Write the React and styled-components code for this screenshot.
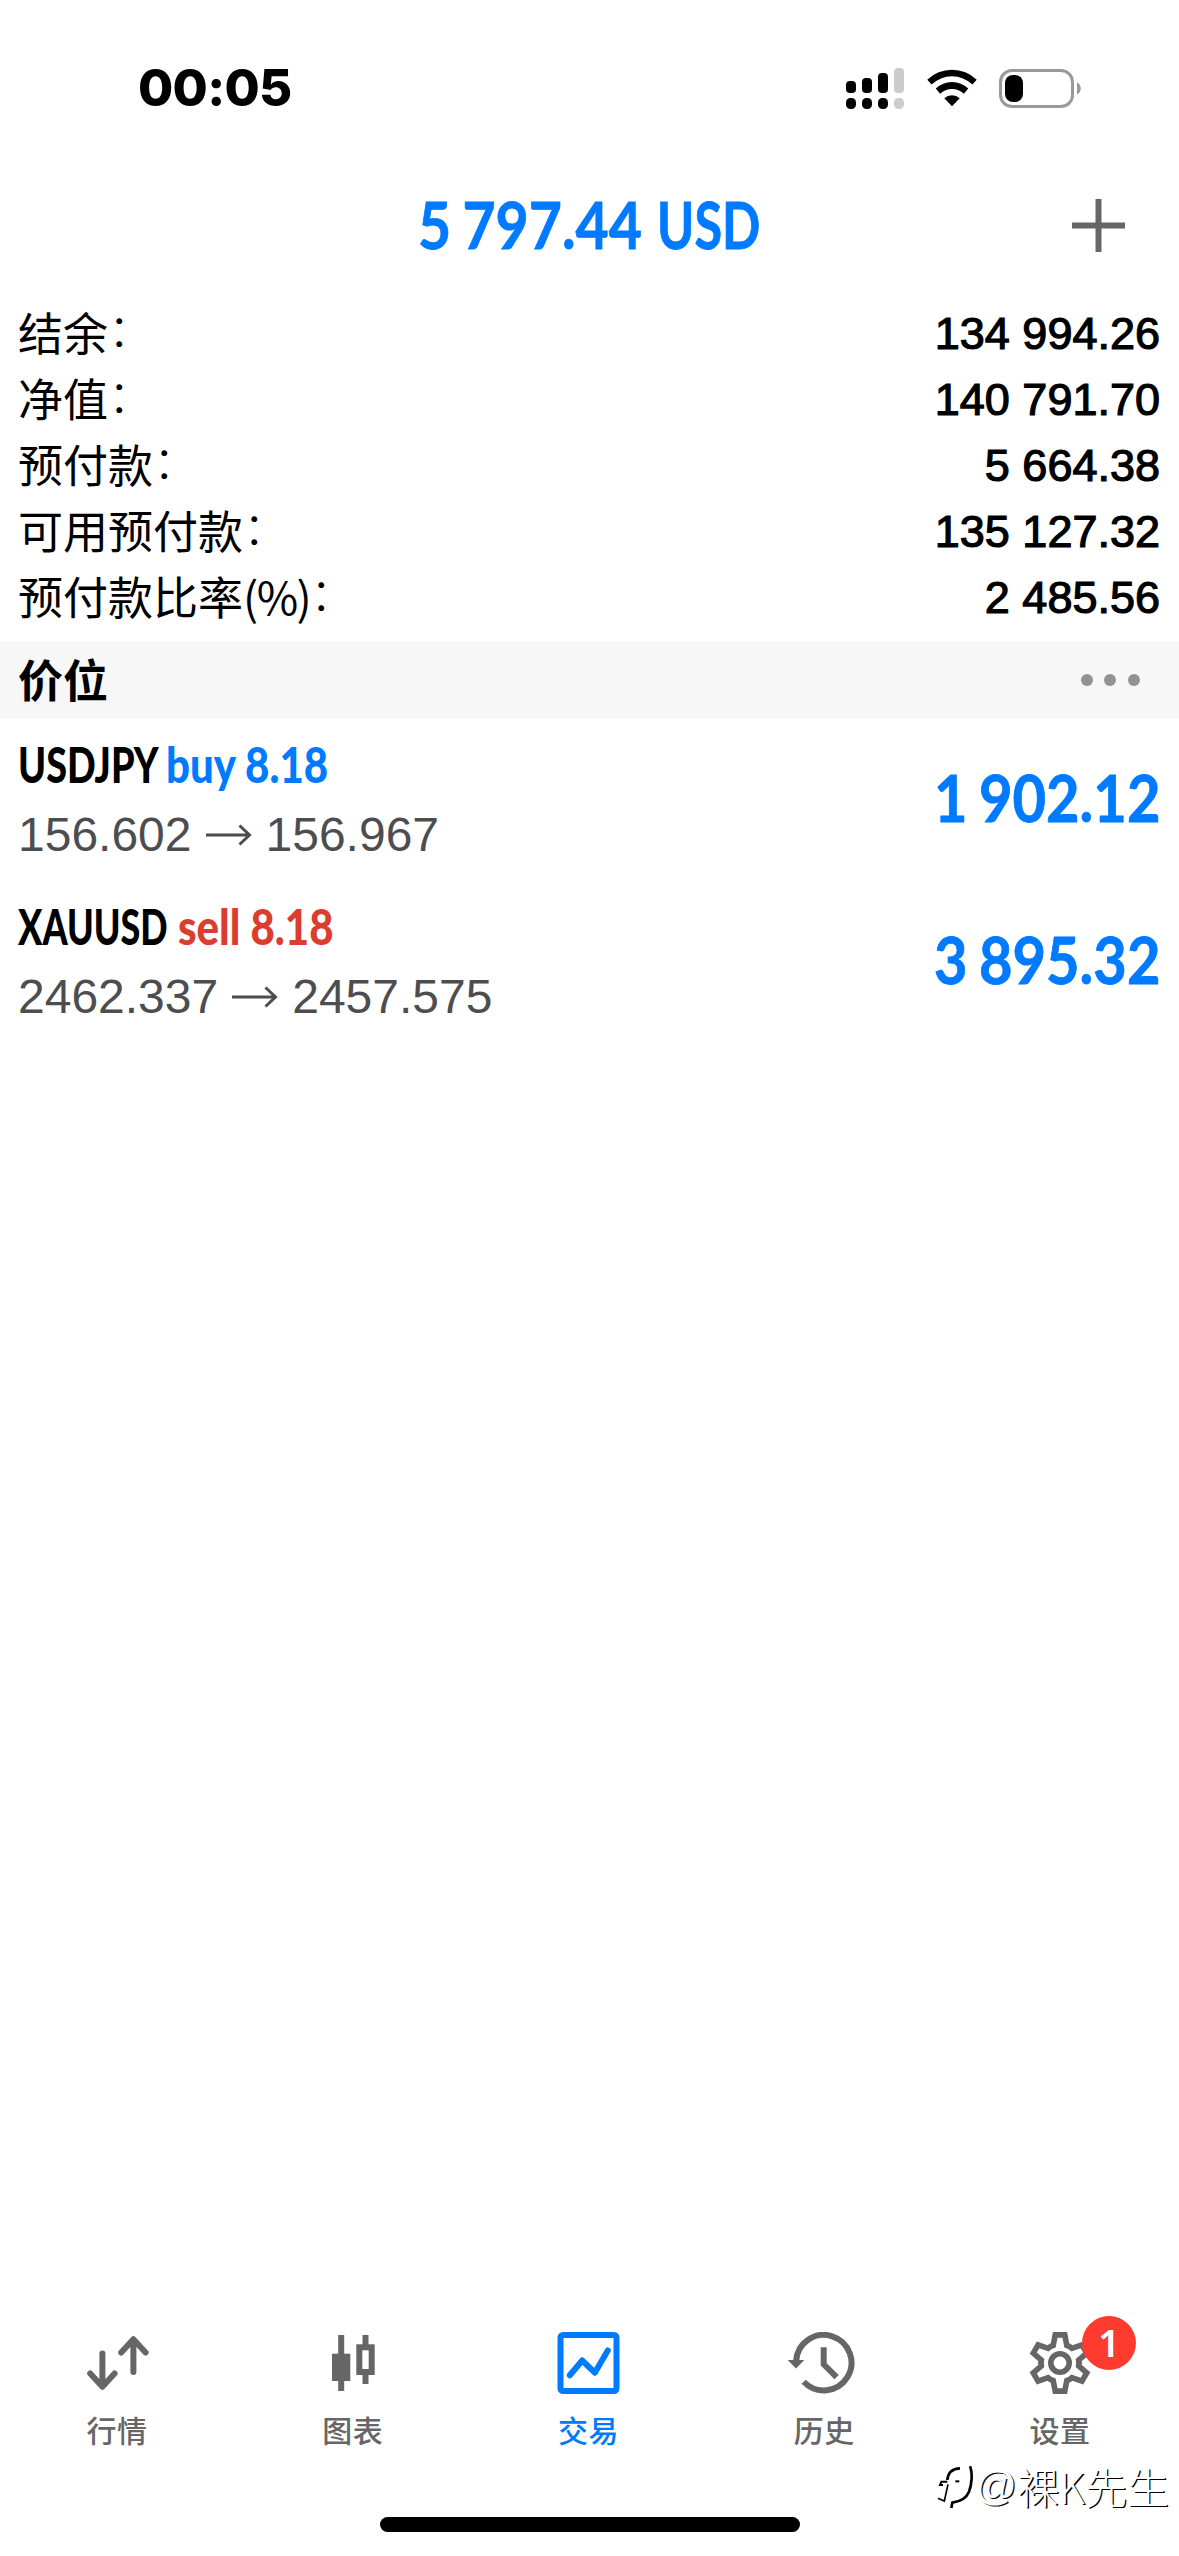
import React from 'react'
import styled, { createGlobalStyle } from 'styled-components'

const BLUE = '#007aff'
const RED = '#db3d2f'
const GRAY = '#666666'

const account = [
  { label: '结余', value: '134 994.26' },
  { label: '净值', value: '140 791.70' },
  { label: '预付款', value: '5 664.38' },
  { label: '可用预付款', value: '135 127.32' },
  { label: '预付款比率', unit: '(%)', value: '2 485.56' },
]

const positions = [
  { symbol: 'USDJPY', width: 148, stretch: 0.755, side: 'buy', lots: '8.18', open: '156.602', price: '156.967', profit: '1 902.12' },
  { symbol: 'XAUUSD', width: 160, stretch: 0.718, side: 'sell', lots: '8.18', open: '2462.337', price: '2457.575', profit: '3 895.32' },
]

const SignalIcon = () => (
  <svg width="58" height="41" viewBox="0 0 58 41">
    <rect x="0" y="13" width="10" height="12" rx="4" />
    <rect x="16" y="10" width="10" height="15" rx="4" />
    <rect x="32" y="5" width="10" height="20" rx="4" />
    <rect x="48" y="0" width="10" height="25" rx="4" fill="#cccccc" />
    <rect x="0" y="30" width="10" height="11" rx="4.5" />
    <rect x="16" y="30" width="10" height="11" rx="4.5" />
    <rect x="32" y="30" width="10" height="11" rx="4.5" />
    <rect x="48" y="30" width="10" height="11" rx="4.5" fill="#cccccc" />
  </svg>
)

const WifiIcon = () => (
  <svg width="50" height="38" viewBox="0 0 50 38">
    <path d="M0.3 10.7A35.6 35.6 0 0 1 49.7 10.7L45.4 15.6A29.3 29.3 0 0 0 4.6 15.6Z" />
    <path d="M8.7 19.6A23.5 23.5 0 0 1 41.3 19.6L36.9 24.8A17.2 17.2 0 0 0 13.1 24.8Z" />
    <path d="M17.3 29.2A11.5 11.5 0 0 1 32.7 29.2L25 37.2Z" />
  </svg>
)

const BatteryIcon = () => (
  <svg width="82" height="39" viewBox="0 0 82 39">
    <rect x="1.5" y="1.5" width="72" height="36" rx="11.5" fill="none" stroke="#999999" strokeWidth="3" />
    <rect x="6" y="6" width="18" height="27" rx="8" />
    <path d="M78 13.5C83 15.6 83 23.4 78 25.5Z" fill="#999999" />
  </svg>
)

const QuotesIcon = () => (
  <TabSvg viewBox="0 0 80 62" strokeWidth="6" strokeLinecap="round" strokeLinejoin="round">
    <path d="M24.4 21.5V54.5M12.2 41.5L24.4 54.7L36.6 41.5" />
    <path d="M55.4 40V7.5M43.2 20.5L55.4 7.3L67.6 20.5" />
  </TabSvg>
)

const ChartsIcon = () => (
  <TabSvg viewBox="0 0 80 62" strokeWidth="6">
    <path d="M27.2 3V59M51.5 3V15M51.5 40V52" />
    <rect x="21" y="24.7" width="12.3" height="21.3" fill="currentColor" />
    <rect x="45.3" y="15.3" width="12.4" height="24.7" />
  </TabSvg>
)

const TradeIcon = () => (
  <TabSvg viewBox="0 0 80 62" strokeWidth="6" strokeLinecap="round" strokeLinejoin="round">
    <rect x="11.5" y="3" width="56" height="56" rx="2.5" />
    <path d="M20.8 43.3L33.2 28.5L45.8 40.7L58.8 18.5" />
  </TabSvg>
)

const HistoryIcon = () => (
  <TabSvg viewBox="0 0 80 62" strokeWidth="6">
    <path d="M11.1 29A27.7 27.7 0 1 1 18.7 49.8" />
    <path d="M2.7 28H19.4L11 36.5Z" fill="currentColor" stroke="none" />
    <path d="M38.7 15.3V32.3L51.6 45.2" />
  </TabSvg>
)

const SettingsIcon = () => (
  <TabSvg viewBox="0 0 80 62" strokeWidth="5.6">
    {[0, 60, 120, 180, 240, 300].map((deg) => (
      <path key={deg} d="M29 14.6L32.2 13.4L34.2 2.9H43.8L45.8 13.4L49 14.6" transform={`rotate(${deg} 39 31)`} />
    ))}
    <circle cx="39" cy="31" r="9.2" />
  </TabSvg>
)

const tabs = [
  { label: '行情', Icon: QuotesIcon },
  { label: '图表', Icon: ChartsIcon },
  { label: '交易', Icon: TradeIcon, active: true },
  { label: '历史', Icon: HistoryIcon },
  { label: '设置', Icon: SettingsIcon, badge: 1 },
]

const App = () => {
  return (
    <>
      <GlobalStyle />
      <Screen>
        <StatusBar>
          <Time>00:05</Time>
          <StatusIcons>
            <SignalIcon />
            <WifiIcon />
            <BatteryIcon />
          </StatusIcons>
        </StatusBar>

        <Header>
          <Total>
            <Amount>5 797.44</Amount>
            <Currency>USD</Currency>
          </Total>
          <AddButton aria-label="add">
            <svg width="53" height="53" viewBox="0 0 53 53" stroke={GRAY} strokeWidth="6">
              <path d="M26.5 0V53M0 26.5H53" />
            </svg>
          </AddButton>
        </Header>

        <Account>
          {account.map((row) => (
            <AccountRow key={row.label}>
              <Label>
                {row.label}
                {row.unit && <Unit>{row.unit}</Unit>}
                <Colon>：</Colon>
              </Label>
              <Value>{row.value}</Value>
            </AccountRow>
          ))}
        </Account>

        <SectionBar>
          <SectionTitle>价位</SectionTitle>
          <More>
            <Dot />
            <Dot />
            <Dot />
          </More>
        </SectionBar>

        <Positions>
          {positions.map((p) => (
            <Position key={p.symbol}>
              <div>
                <Deal>
                  <Symbol $width={p.width} $stretch={p.stretch}>{p.symbol}</Symbol>
                  <Side $side={p.side}>{p.side} {p.lots}</Side>
                </Deal>
                <Prices>
                  {p.open}
                  <svg width="46" height="22" viewBox="0 0 46 22" fill="none" stroke="currentColor" strokeWidth="3">
                    <path d="M0 11H44M33.5 1.5L43.5 11L33.5 20.5" />
                  </svg>
                  {p.price}
                </Prices>
              </div>
              <Profit>{p.profit}</Profit>
            </Position>
          ))}
        </Positions>

        <TabBar>
          {tabs.map(({ label, Icon, active, badge }) => (
            <Tab key={label} $active={active}>
              <Icon />
              <TabLabel>{label}</TabLabel>
              {badge && <Badge>{badge}</Badge>}
            </Tab>
          ))}
        </TabBar>

        <HomeIndicator />

        <Watermark>
          <svg width="40" height="46" viewBox="108 546 120 138" fill="none" stroke="#000" strokeWidth="8">
            <path d="M183 562C160 563 147 573 145 597" />
            <path d="M145 602H127L123 612H132" strokeWidth="6" />
            <path d="M147 610L136 660L117 652" strokeWidth="5" />
            <path d="M213 556C221 575 219 610 210 632C202 652 185 661 160 665L157 681" />
            <path d="M169 601H181" strokeWidth="6" />
          </svg>
          <At>@</At>裸K先生
        </Watermark>
      </Screen>
    </>
  )
}

export default App

const GlobalStyle = createGlobalStyle`
  body {
    margin: 0;
    background: #fff;
  }
`

const Screen = styled.div`
  position: relative;
  display: flex;
  flex-direction: column;
  width: 1179px;
  height: 2556px;
  background: #fff;
  color: #000;
  font-family: 'Liberation Sans', 'Noto Sans CJK SC', sans-serif;
  overflow: hidden;
`

const StatusBar = styled.div`
  display: flex;
  justify-content: space-between;
  align-items: center;
  height: 176px;
  padding: 0 98px 0 138px;
  box-sizing: border-box;
`

const Time = styled.div`
  font: 800 51px/60px Inter, sans-serif;
  letter-spacing: -0.7px;
`

const StatusIcons = styled.div`
  display: flex;
  align-items: center;
  gap: 22.5px;
`

const Header = styled.div`
  display: grid;
  grid-template-columns: 1fr auto 1fr;
  align-items: center;
  height: 98px;
  padding: 0 54px;
`

const Total = styled.div`
  grid-column: 2;
  display: flex;
  padding-bottom: 3px;
  font: 700 65px/80px Lato, sans-serif;
  color: ${BLUE};
  -webkit-text-stroke: 0.8px ${BLUE};
`

const Amount = styled.span`
  width: 239px;
  white-space: nowrap;
  word-spacing: -3px;
  transform: scaleX(0.88);
  transform-origin: left;
`

const Currency = styled.span`
  width: 104px;
  transform: scaleX(0.775);
  transform-origin: left;
`

const AddButton = styled.button`
  justify-self: end;
  display: flex;
  padding: 0;
  border: none;
  background: none;
`

const Account = styled.div`
  padding: 26px 19px 11px 18px;
`

const AccountRow = styled.div`
  display: flex;
  justify-content: space-between;
  height: 66px;
  font-size: 45px;
`

const Label = styled.div`
  font-family: 'Noto Sans CJK SC', sans-serif;
  line-height: 63px;
`

const Unit = styled.span`
  letter-spacing: -1.6px;
`

const Colon = styled.span`
  display: inline-block;
  font-weight: 300;
  transform: translateY(-4px);
`

const Value = styled.div`
  line-height: 68px;
  -webkit-text-stroke: 1.2px #000;
`

const SectionBar = styled.div`
  display: flex;
  justify-content: space-between;
  align-items: center;
  height: 78px;
  padding: 0 39px 0 18px;
  background: #f7f7f7;
`

const SectionTitle = styled.div`
  padding-bottom: 3px;
  font: 700 45px/66px 'Noto Sans CJK SC', sans-serif;
`

const More = styled.div`
  display: flex;
  gap: 11.6px;
`

const Dot = styled.span`
  width: 12px;
  height: 12px;
  border-radius: 50%;
  background: #929292;
`

const Positions = styled.div`
  flex: 1;
`

const Position = styled.div`
  display: flex;
  justify-content: space-between;
  align-items: center;
  height: 162px;
  padding: 0 19px 0 18px;
`

const Deal = styled.div`
  display: flex;
  font: 900 50px/66px Lato, sans-serif;
  white-space: nowrap;
`

const Symbol = styled.span`
  width: ${({ $width }) => $width}px;
  transform: scaleX(${({ $stretch }) => $stretch});
  transform-origin: left;
`

const Side = styled.span`
  color: ${({ $side }) => ($side === 'buy' ? BLUE : RED)};
  transform: scaleX(0.84);
  transform-origin: left;
`

const Prices = styled.div`
  display: flex;
  align-items: center;
  gap: 14px;
  padding-top: 3px;
  font-size: 48px;
  line-height: 70px;
  color: #4d4d50;
`

const Profit = styled.div`
  padding-bottom: 7px;
  font: 700 65px/80px Lato, sans-serif;
  color: ${BLUE};
  -webkit-text-stroke: 0.8px ${BLUE};
  word-spacing: -3px;
  transform: scaleX(0.89);
  transform-origin: right;
`

const TabBar = styled.div`
  display: flex;
  height: 224px;
`

const Tab = styled.div`
  position: relative;
  flex: 1;
  display: flex;
  flex-direction: column;
  align-items: center;
  gap: 13px;
  color: ${({ $active }) => ($active ? BLUE : GRAY)};
`

const TabLabel = styled.span`
  padding-right: 2px;
  font: 500 30px/44px 'Noto Sans CJK SC', sans-serif;
  letter-spacing: 0.5px;
`

const TabSvg = styled.svg`
  width: 80px;
  height: 62px;
  fill: none;
  stroke: currentColor;
`

const Badge = styled.span`
  position: absolute;
  top: -16px;
  left: 139px;
  width: 54px;
  height: 54px;
  border-radius: 50%;
  background: #ff3b30;
  color: #fff;
  font: 600 38px/52px 'Noto Sans', sans-serif;
  text-align: center;
`

const HomeIndicator = styled.div`
  position: absolute;
  left: 380px;
  bottom: 24px;
  width: 420px;
  height: 15px;
  border-radius: 8px;
  background: #000;
`

const Watermark = styled.div`
  position: absolute;
  right: 10px;
  bottom: 40px;
  display: flex;
  align-items: center;
  font: 300 42px/60px 'Noto Sans CJK SC', sans-serif;
  color: #fff;
  text-shadow: 1.3px 1.3px 0 #000;
`

const At = styled.span`
  font-family: 'Liberation Sans', sans-serif;
  font-size: 41px;
`
